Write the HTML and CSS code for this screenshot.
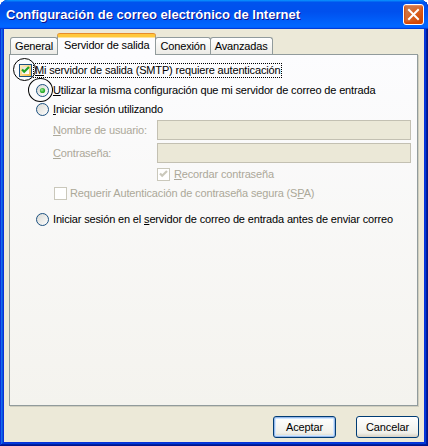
FILE: index.html
```html
<!DOCTYPE html>
<html lang="es">
    <head>
        <meta charset="utf-8">
        <title>Configuración de correo electrónico de Internet</title>
        <link rel="stylesheet" href="styles.css">
    </head>
    <body>
        <div class="window">
            <div class="titlebar">
                <span class="title">Configuración de correo electrónico de Internet</span>
                <span class="close">
                    <svg width="13" height="13" viewBox="0 0 13 13"><path d="M2 2 L11 11 M11 2 L2 11" stroke="#fff" stroke-width="2" stroke-linecap="square"/></svg>
                </span>
            </div>
            <div class="client">
                <div class="tabs">
                    <span class="tab">General</span>
                    <span class="tab active">Servidor de salida</span>
                    <span class="tab">Conexión</span>
                    <span class="tab">Avanzadas</span>
                </div>
                <div class="panel">
                    <div class="row row-auth">
                        <span class="mark">
                            <svg width="13" height="13" viewBox="0 0 13 13">
                                <rect x="0.5" y="0.5" width="12" height="12" fill="url(#hotfill)" stroke="#1c5180"/>
                                <rect x="3" y="3" width="7" height="7" fill="url(#boxfill)"/>
                                <path d="M3 5.5 L5.2 7.8 L10 3" fill="none" stroke="#21a121" stroke-width="2.2"/>
                            </svg>
                            <span class="ring ring-check"></span>
                        </span>
                        <span class="focus"><u>M</u>i servidor de salida (SMTP) requiere autenticación</span>
                    </div>
                    <div class="row row-same">
                        <span class="mark">
                            <svg width="13" height="13" viewBox="0 0 13 13">
                                <circle cx="6.5" cy="6.5" r="6" fill="url(#radiofill)" stroke="#1c5180"/>
                                <circle cx="6.5" cy="6.5" r="2.6" fill="url(#dot)"/>
                            </svg>
                            <span class="ring ring-radio"></span>
                        </span>
                        <span><u>U</u>tilizar la misma configuración que mi servidor de correo de entrada</span>
                    </div>
                    <div class="row row-login">
                        <span class="mark">
                            <svg width="13" height="13" viewBox="0 0 13 13">
                                <circle cx="6.5" cy="6.5" r="6" fill="url(#radiofill)" stroke="#1c5180"/>
                            </svg>
                        </span>
                        <span><u>I</u>niciar sesión utilizando</span>
                    </div>
                    <div class="field field-user">
                        <label class="field-label"><u>N</u>ombre de usuario:</label>
                        <span class="input"></span>
                    </div>
                    <div class="field field-pass">
                        <label class="field-label"><u>C</u>ontraseña:</label>
                        <span class="input"></span>
                    </div>
                    <div class="row row-remember disabled">
                        <span class="mark">
                            <svg width="13" height="13" viewBox="0 0 13 13">
                                <rect x="0.5" y="0.5" width="12" height="12" fill="#fff" stroke="#cac8bb"/>
                                <path d="M3 5.5 L5.2 7.8 L10 3" fill="none" stroke="#cac8bb" stroke-width="2.2"/>
                            </svg>
                        </span>
                        <span><u>R</u>ecordar contraseña</span>
                    </div>
                    <div class="row row-spa disabled">
                        <span class="mark">
                            <svg width="13" height="13" viewBox="0 0 13 13">
                                <rect x="0.5" y="0.5" width="12" height="12" fill="#fff" stroke="#cac8bb"/>
                            </svg>
                        </span>
                        <span>Requerir Autenticación de contraseña segura (S<u>P</u>A)</span>
                    </div>
                    <div class="row row-before">
                        <span class="mark">
                            <svg width="13" height="13" viewBox="0 0 13 13">
                                <circle cx="6.5" cy="6.5" r="6" fill="url(#radiofill)" stroke="#1c5180"/>
                            </svg>
                        </span>
                        <span>Iniciar sesión en el <u>s</u>ervidor de correo de entrada antes de enviar correo</span>
                    </div>
                </div>
                <div class="buttons">
                    <button class="btn btn-default">Aceptar</button>
                    <button class="btn">Cancelar</button>
                </div>
            </div>
        </div>

        <svg class="defs" width="0" height="0">
            <defs>
                <linearGradient id="hotfill" x1="0" y1="0" x2="1" y2="1">
                    <stop offset="0" stop-color="#fff0cf"/>
                    <stop offset="0.5" stop-color="#fdd889"/>
                    <stop offset="1" stop-color="#f8b330"/>
                </linearGradient>
                <linearGradient id="boxfill" x1="0" y1="0" x2="1" y2="1">
                    <stop offset="0" stop-color="#e2e1da"/>
                    <stop offset="1" stop-color="#ffffff"/>
                </linearGradient>
                <linearGradient id="radiofill" x1="0" y1="0" x2="1" y2="1">
                    <stop offset="0" stop-color="#d8d8d2"/>
                    <stop offset="1" stop-color="#ffffff"/>
                </linearGradient>
                <radialGradient id="dot" cx="0.4" cy="0.4" r="0.6">
                    <stop offset="0" stop-color="#a9e9a9"/>
                    <stop offset="0.5" stop-color="#4bc24b"/>
                    <stop offset="1" stop-color="#21a121"/>
                </radialGradient>
            </defs>
        </svg>
    </body>
</html>
```

FILE: styles.css
```css
* {
    box-sizing: border-box;
}

body {
    margin: 0;
    overflow: hidden;
    font-family: "Liberation Sans", Arial, sans-serif;
    font-size: 11px;
    letter-spacing: -0.15px;
    color: #000;
}

.window {
    width: 428px;
    height: 446px;
    display: flex;
    flex-direction: column;
    background: #0831d9;
    border-radius: 8px 8px 0 0;
    box-shadow: inset -1px -1px #00138c, inset 1px 1px #0831d9,
                inset -2px -2px #001ea0, inset 2px 2px #166aee,
                inset -3px -3px #003bda, inset 3px 3px #0855dd;
}

/** title bar */
.titlebar {
    height: 29px;
    display: flex;
    align-items: center;
    justify-content: space-between;
    padding: 0 4px 0 6px;
    border-radius: 8px 8px 0 0;
    background: linear-gradient(180deg, #0997ff, #0053ee 8%, #0050ee 40%, #0066ff 88%, #0066ff 93%, #005bff 95%, #003dd7 96%, #003dd7);
}

.title {
    color: #fff;
    font-weight: bold;
    font-size: 13px;
    letter-spacing: 0;
    text-shadow: 1px 1px #0f1089;
    margin-top: -1px;
}

.close {
    width: 21px;
    height: 21px;
    margin-top: -1px;
    display: flex;
    align-items: center;
    justify-content: center;
    border: 1px solid #fff;
    border-radius: 3px;
    background: radial-gradient(circle at 90% 90%, #cc4600 0%, #dc6527 55%, #cd7546 70%),
                #e05a2a;
    box-shadow: inset 0 -1px 2px 1px #da4600, inset 0 1px 1px #f1a786;
}

/** dialog body */
.client {
    flex: 1;
    margin: 0 4px 4px;
    padding: 5px 6px 0 5px;
    background: #ece9d8;
    display: flex;
    flex-direction: column;
}

.tabs {
    height: 20px;
    display: flex;
    align-items: flex-end;
    padding-left: 1px;
}

.tab {
    height: 17px;
    line-height: 16px;
    padding: 0 4px;
    border: 1px solid #919b9c;
    border-bottom: none;
    border-radius: 3px 3px 0 0;
    background: linear-gradient(#ffffff, #ecebe6);
    white-space: nowrap;
}

.tab + .tab {
    margin-left: -1px;
}

.tab.active {
    height: 21px;
    line-height: 16px;
    padding: 0 6px;
    margin-bottom: -1px;
    position: relative;
    z-index: 1;
    background: #fcfcfe;
    border-top: 3px solid #ffc83c;
    box-shadow: inset 0 1px #ffe499, 0 -1px #e68b2c;
}

.panel {
    flex: 1;
    border: 1px solid #919b9c;
    background: linear-gradient(#fcfcfe, #f4f3ee);
    box-shadow: 1px 1px 0 #d0cebf;
    padding: 8px 0 0 9px;
    display: flex;
    flex-direction: column;
}

.row {
    display: flex;
    align-items: center;
    gap: 4px;
    height: 13px;
    line-height: 13px;
    white-space: nowrap;
}

.mark {
    position: relative;
    width: 13px;
    height: 13px;
    flex: none;
}

.mark svg {
    display: block;
}

/** hand drawn circles over the screenshot */
.ring {
    position: absolute;
    border: 1px solid #000;
    border-radius: 50%;
    pointer-events: none;
}

.ring-check {
    left: -6px;
    top: -6px;
    width: 23px;
    height: 23px;
}

.ring-radio {
    left: -8px;
    top: -6px;
    width: 25px;
    height: 24px;
}

.row-auth {
    height: 15px;
    gap: 1px;
}

.focus {
    border: 1px dotted #000;
    padding: 0 1px 0 1px;
    line-height: 13px;
}

.row-same {
    margin: 6px 0 0 17px;
}

.row-login {
    margin: 6px 0 0 17px;
}

.field {
    display: flex;
    align-items: center;
    height: 20px;
    margin-left: 34px;
}

.field-user {
    margin-top: 4px;
}

.field-pass {
    margin-top: 3px;
}

.field-label {
    width: 104px;
    color: #aca899;
}

.input {
    width: 254px;
    height: 20px;
    border: 1px solid #c3c0b2;
    background: #ebe8d7;
}

.disabled {
    color: #aca899;
}

.row-remember {
    margin: 5px 0 0 138px;
}

.row-spa {
    margin: 6px 0 0 35px;
    gap: 3px;
}

.row-before {
    margin: 13px 0 0 17px;
}

/** bottom buttons */
.buttons {
    display: flex;
    justify-content: flex-end;
    gap: 20px;
    margin: 10px -1px 4px 0;
}

.btn {
    width: 63px;
    height: 22px;
    padding: 0;
    font: inherit;
    letter-spacing: inherit;
    color: #000;
    border: 1px solid #003c74;
    border-radius: 3px;
    background: linear-gradient(#ffffff, #f0f0ea 80%, #e3e0d4 90%, #d6d0c5);
}

.btn-default {
    box-shadow: inset 0 0 0 1px #98b8ea, inset 0 0 0 2px #cee7ff;
}

.defs {
    display: block;
}
```
